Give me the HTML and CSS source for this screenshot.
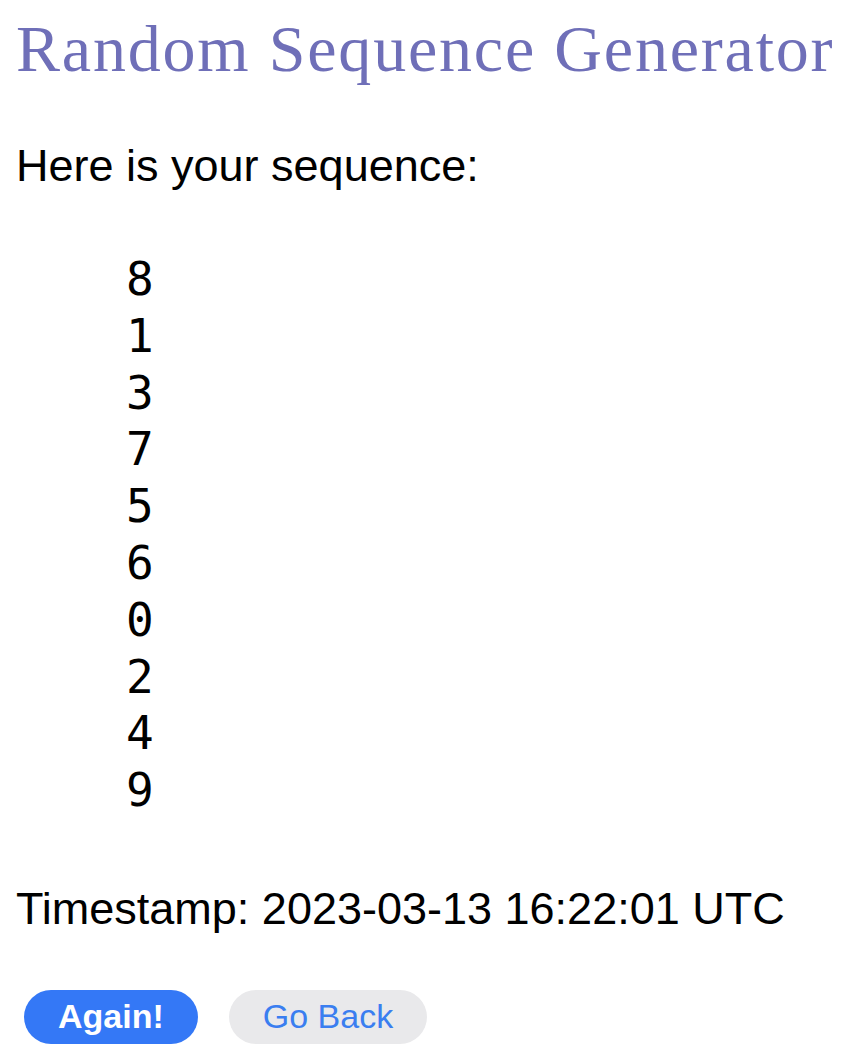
FILE: index.html
```html
<!doctype html>
<html lang="en">
    <head>
        <meta charset="UTF-8" />
        <meta name="viewport" content="width=device-width, initial-scale=1.0" />
        <title>Random Sequence Generator</title>
        <link rel="stylesheet" href="styles.css">
    </head>
    <body>
        <h1 class="title">Random Sequence Generator</h1>
        <p class="intro">Here is your sequence:</p>

        <ol class="sequence">
            <li>8</li>
            <li>1</li>
            <li>3</li>
            <li>7</li>
            <li>5</li>
            <li>6</li>
            <li>0</li>
            <li>2</li>
            <li>4</li>
            <li>9</li>
        </ol>

        <p class="timestamp">Timestamp: 2023-03-13 16:22:01 UTC</p>

        <div class="actions">
            <a class="btn btn-primary" href="#">Again!</a>
            <a class="btn btn-secondary" href="#">Go Back</a>
        </div>
    </body>
</html>
```

FILE: styles.css
```css
body {
    margin: 0;
    padding: 0 16px;
    background: #ffffff;
    color: #000000;
    font-family: "Liberation Sans", Arial, sans-serif;
}

.title {
    margin: 13px 0 0;
    font-family: "Liberation Serif", Georgia, serif;
    font-size: 66px;
    font-weight: normal;
    line-height: 72px;
    letter-spacing: 1.8px;
    color: #6f6fb8;
    white-space: nowrap;
}

.intro,
.timestamp {
    font-size: 45px;
    line-height: 52px;
}

.intro {
    margin: 55px 0 0;
}

.sequence {
    margin: 59px 0 0;
    padding: 0 0 0 110px;
    list-style: none;
    font-family: "DejaVu Sans Mono", "Liberation Mono", monospace;
    font-size: 46px;
    line-height: 56.8px;
}

.timestamp {
    margin: 64px 0 0;
}

.actions {
    display: flex;
    gap: 31px;
    margin: 55px 0 0 8px;
}

.btn {
    display: flex;
    align-items: center;
    height: 54px;
    padding: 0 34px;
    border-radius: 27px;
    font-size: 34px;
    text-decoration: none;
}

.btn-primary {
    background: #3478f6;
    color: #ffffff;
    font-weight: bold;
}

.btn-secondary {
    background: #e9e9eb;
    color: #3a7ef0;
}
```
